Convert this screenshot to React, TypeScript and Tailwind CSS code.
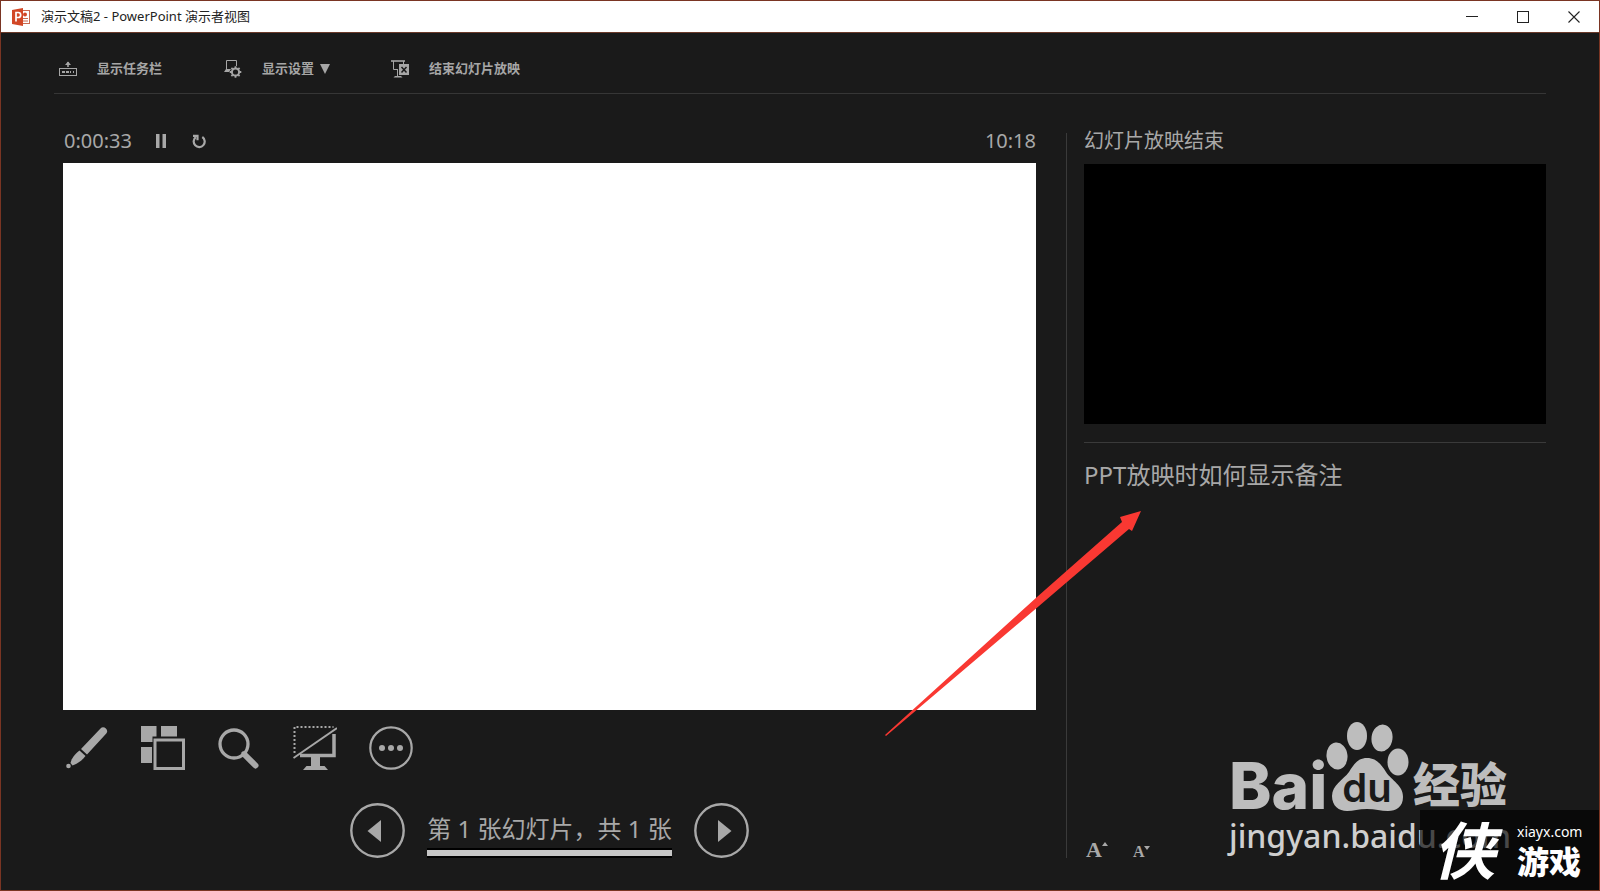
import React, { useState } from "react";

const TitleBar = () => (
  <header className="flex h-8 items-center border-b border-[#6b3a2a] bg-white text-[#222]">
    <svg className="ml-[11px] h-[18px] w-[18px]" viewBox="0 0 18 18">
      <rect x="10" y="2.5" width="7.5" height="13" fill="#fff" stroke="#c9694f" />
      <circle cx="13" cy="6.5" r="2" fill="#d24726" />
      <path d="M11 10.5h5M11 13h5" stroke="#c9694f" />
      <path d="M0 2 11 0v18L0 16z" fill="#d24726" />
      <path d="M4 13.5v-9h2.2a2.5 2.5 0 0 1 0 5H4" fill="none" stroke="#fff" strokeWidth="1.7" />
    </svg>
    <h1 className="ml-[11px] text-[13px]">演示文稿2 - PowerPoint 演示者视图</h1>
    <div className="ml-auto flex h-full">
      <button aria-label="最小化" className="flex w-[51px] items-center justify-center">
        <svg className="h-3 w-3" viewBox="0 0 12 12" stroke="#222">
          <path d="M0 5.5h12" />
        </svg>
      </button>
      <button aria-label="最大化" className="flex w-[51px] items-center justify-center">
        <svg className="h-3 w-3" viewBox="0 0 12 12" fill="none" stroke="#222">
          <rect x=".5" y=".5" width="11" height="11" />
        </svg>
      </button>
      <button aria-label="关闭" className="flex w-[51px] items-center justify-center">
        <svg className="h-3 w-3" viewBox="0 0 12 12" stroke="#222" strokeWidth="1.1">
          <path d="m.5.5 11 11M11.5.5l-11 11" />
        </svg>
      </button>
    </div>
  </header>
);

const TaskbarIcon = () => (
  <svg className="h-[18px] w-[18px]" viewBox="0 0 18 18" fill="none" stroke="currentColor">
    <rect x=".5" y="8.5" width="17" height="7" />
    <path d="M3 12h3M7 12h3M11 12h1M14 12h1" strokeWidth="2" />
    <path d="M9 2v5" strokeWidth="1.6" />
    <path d="M6 5 9 1.5l3 3.5z" fill="currentColor" stroke="none" />
  </svg>
);

const DisplayIcon = () => (
  <svg className="h-[18px] w-[18px]" viewBox="0 0 18 18" fill="none" stroke="currentColor">
    <path d="M2.5 9V.5h10V6" />
    <path d="M2 9h5l-2 3H0z" fill="currentColor" stroke="none" />
    <circle cx="11.5" cy="12" r="3.6" strokeWidth="2" />
    <path
      d="M11.5 6.2v2M11.5 15.8v2M5.7 12h2M15.3 12h2M7.4 7.9l1.4 1.4M14.2 14.7l1.4 1.4M15.6 7.9l-1.4 1.4M8.8 14.7l-1.4 1.4"
      strokeWidth="1.8"
    />
  </svg>
);

const EndShowIcon = () => (
  <svg className="h-[18px] w-[18px]" viewBox="0 0 18 18" fill="none" stroke="currentColor">
    <path d="M0 1h14" strokeWidth="1.6" />
    <path d="M2.5 1v8.5H7M12.5 1v3M6.5 9.5V17" />
    <path d="M2.5 17.5 4 16h6l1.5 1.5z" fill="currentColor" stroke="none" />
    <rect x="8" y="4" width="10" height="11" fill="currentColor" stroke="none" />
    <path d="m10.5 7 5 5.5M15.5 7l-5 5.5" stroke="#1a1a1a" strokeWidth="1.5" />
  </svg>
);

const CommandBar = () => (
  <nav className="flex h-[61px] items-center border-b border-[#363636] pt-[11px] pl-[5px] text-[13px] font-bold text-[#a6a6a6]">
    <button className="flex w-[165px] items-center gap-5">
      <TaskbarIcon />
      显示任务栏
    </button>
    <button className="flex w-[167px] items-center gap-5">
      <DisplayIcon />
      <span className="flex items-center gap-[6px]">
        显示设置
        <svg className="h-[10px] w-[10px]" viewBox="0 0 10 10">
          <path d="M0 0h10L5 10z" fill="currentColor" />
        </svg>
      </span>
    </button>
    <button className="flex items-center gap-5">
      <EndShowIcon />
      结束幻灯片放映
    </button>
  </nav>
);

const PenIcon = () => (
  <svg className="h-11 w-11" viewBox="0 0 44 44" fill="currentColor">
    <path d="M16 23 35.5 2.5c3-3.500 9 1.500 5.800 5L22 28.500z" />
    <path d="M14.5 24.5 20.5 30c-3 4-8 8-13 9.500L5.500 37c1-5 5-9.500 9-12.500z" />
    <circle cx="3.5" cy="40" r="2.3" />
  </svg>
);

const SlidesIcon = () => (
  <svg className="h-11 w-11" viewBox="0 0 44 44" fill="currentColor">
    <path d="M0 0h15.5v10.500h-4V16H0zM20 0h16v10.500H20zM0 21h11v16H0z" />
    <rect x="14" y="14" width="28.5" height="28.5" fill="none" stroke="currentColor" strokeWidth="3" />
  </svg>
);

const ZoomIcon = () => (
  <svg className="h-11 w-11" viewBox="0 0 44 44" fill="none" stroke="currentColor">
    <circle cx="17" cy="18" r="14" strokeWidth="3.3" />
    <path d="m27.5 28.5 11 11" strokeWidth="6" strokeLinecap="round" />
    <path d="m25 26 4 4" strokeWidth="3" />
  </svg>
);

const BlackScreenIcon = () => (
  <svg className="h-11 w-11" viewBox="0 0 44 44" fill="none" stroke="currentColor">
    <path d="M1.5 27V1h39" strokeWidth="2" strokeDasharray="2 2" />
    <path d="M.5 32 44 2" strokeWidth="2" />
    <path d="M7 29.5h34V8" strokeWidth="3.5" />
    <path d="M18 31h9v9h4.500l3.500 4H10l3.500-4H18z" fill="currentColor" stroke="none" />
  </svg>
);

const MoreIcon = () => (
  <svg className="h-11 w-11" viewBox="0 0 44 44" fill="currentColor">
    <circle cx="22" cy="22" r="20.7" fill="none" stroke="currentColor" strokeWidth="2.2" />
    <circle cx="13" cy="22" r="3" />
    <circle cx="22" cy="22" r="3" />
    <circle cx="31" cy="22" r="3" />
  </svg>
);

const tools = [
  { label: "笔", Icon: PenIcon },
  { label: "所有幻灯片", Icon: SlidesIcon },
  { label: "放大", Icon: ZoomIcon },
  { label: "黑屏", Icon: BlackScreenIcon },
  { label: "更多", Icon: MoreIcon },
];

const Watermark = () => (
  <div className="pointer-events-none absolute right-[84px] bottom-[34px] w-[286px] text-[#bdbdbd]">
    <div className="flex h-[100px] items-end">
      <span className="w-[96px] font-[Inter] text-[64px] leading-[54px] font-extrabold">Bai</span>
      <svg className="mt-[6px] h-[92px] w-[85px] shrink-0 self-start" viewBox="0 0 85 92" fill="currentColor">
        <ellipse cx="12" cy="37" rx="10.5" ry="13.5" transform="rotate(-6 12 37)" />
        <ellipse cx="32" cy="17" rx="10" ry="14" />
        <ellipse cx="57" cy="19" rx="10.5" ry="13.5" transform="rotate(8 57 19)" />
        <ellipse cx="73" cy="43" rx="10.5" ry="13.5" />
        <path d="M42 39c9 0 14 6 19 14 6 9 17 13 17 25 0 10-7 14-15 14-7 0-13-2-21-2s-14 2-20 2C14 92 7 87 7 77c0-11 11-16 17-24 5-8 9-14 18-14z" />
        <text x="42" y="83" textAnchor="middle" fill="#1a1a1a" className="font-[Inter] text-[40px] font-semibold">
          du
        </text>
      </svg>
      <span className="ml-[3px] text-[47px] leading-[58px] font-black whitespace-nowrap">经验</span>
    </div>
    <p className="mt-[3px] text-[32px] leading-10 font-medium text-[#cfcfcf]">jingyan.baidu.com</p>
  </div>
);

const SiteBadge = () => (
  <div className="pointer-events-none absolute right-0 bottom-0 flex h-20 w-[179px] items-center bg-black/65 pl-[13px] text-white">
    <span className="w-[84px] text-[62px] leading-[80px] font-bold italic">侠</span>
    <div className="pt-1">
      <p className="text-sm leading-5">xiayx.com</p>
      <p className="text-[32px] leading-10 font-black">游戏</p>
    </div>
  </div>
);

export default function App() {
  const [paused, setPaused] = useState(false);

  return (
    <div className="relative flex min-h-screen flex-col border border-[#7a3523] bg-[#1a1a1a] font-['Noto_Sans','Noto_Sans_CJK_SC',sans-serif] text-[#a8a8a8]">
      <TitleBar />
      <main className="flex flex-1 flex-col px-[53px]">
        <CommandBar />
        <div className="mt-[39px] grid grid-cols-[973fr_480fr] gap-[30px] pl-[9px]">
          <section>
            <div className="flex h-[30px] items-start pl-px text-xl leading-4">
              <time>0:00:33</time>
              <button aria-label="暂停" onClick={() => setPaused(!paused)} className="ml-6">
                <svg className="h-4 w-[10px]" viewBox="0 0 10 16" fill="currentColor">
                  {paused ? <path d="M0 1l10 7-10 7z" /> : <path d="M0 1h3.5v14H0zM6.5 1H10v14H6.5z" />}
                </svg>
              </button>
              <button aria-label="重新启动计时器" className="ml-[26px]">
                <svg className="h-4 w-[14px]" viewBox="0 0 14 16" fill="none" stroke="currentColor" strokeWidth="2.2">
                  <path d="M10.3 4a5.500 5.500 0 1 1-6.500.2" />
                  <path d="M1 2.800h4.500v4.500" />
                </svg>
              </button>
              <time className="ml-auto">10:18</time>
            </div>
            <div className="aspect-video bg-white" />
            <div className="mt-4 flex gap-8 pl-[2px]">
              {tools.map(({ label, Icon }) => (
                <button key={label} aria-label={label}>
                  <Icon />
                </button>
              ))}
            </div>
            <div className="mt-[33px] flex items-center justify-center gap-[22px]">
              <button aria-label="上一张">
                <svg className="h-[55px] w-[55px]" viewBox="0 0 55 55" fill="currentColor">
                  <circle cx="27.5" cy="27.5" r="26.2" fill="none" stroke="currentColor" strokeWidth="2.4" />
                  <path d="M31 17v22L17.500 28z" />
                </svg>
              </button>
              <div className="flex h-[55px] flex-col justify-between">
                <p className="pt-2 text-2xl leading-9">第 1 张幻灯片，共 1 张</p>
                <div className="h-[10px] border-y-2 border-black bg-[#c6c6c6]" />
              </div>
              <button aria-label="下一张">
                <svg className="h-[55px] w-[55px]" viewBox="0 0 55 55" fill="currentColor">
                  <circle cx="27.5" cy="27.5" r="26.2" fill="none" stroke="currentColor" strokeWidth="2.4" />
                  <path d="M24 17v22l13.500-11z" />
                </svg>
              </button>
            </div>
          </section>

          <aside className="flex flex-col border-l border-[#3a3a3a] pl-[17px]">
            <h2 className="h-[31px] text-xl leading-4">幻灯片放映结束</h2>
            <div className="aspect-video bg-black" />
            <div className="mt-[18px] border-t border-[#3a3a3a] pt-[14px]">
              <p className="text-2xl leading-9">PPT放映时如何显示备注</p>
            </div>
            <div className="mt-auto flex items-end gap-[25px] pl-[2px] font-['Liberation_Serif',serif] font-bold">
              <button aria-label="放大文本" className="flex items-start text-[22px] leading-4">
                <span>A</span>
                <svg className="h-[4px] w-[6px]" viewBox="0 0 6 4">
                  <path d="M3 0l3 4H0z" fill="currentColor" />
                </svg>
              </button>
              <button aria-label="缩小文本" className="flex items-start text-base leading-3">
                <span>A</span>
                <svg className="h-[4px] w-[6px]" viewBox="0 0 6 4">
                  <path d="M0 0h6L3 4z" fill="currentColor" />
                </svg>
              </button>
            </div>
          </aside>
        </div>
      </main>

      {/* 指向备注的箭头 */}
      <svg className="pointer-events-none absolute top-[510px] left-[884px] h-[226px] w-[256px]" viewBox="0 0 256 226">
        <path d="M0 224 152 86 237 11 235 6 256 0 247 20 244 18 154 95 1 225z" fill="#f93832" />
      </svg>
      <Watermark />
      <SiteBadge />
    </div>
  );
}
